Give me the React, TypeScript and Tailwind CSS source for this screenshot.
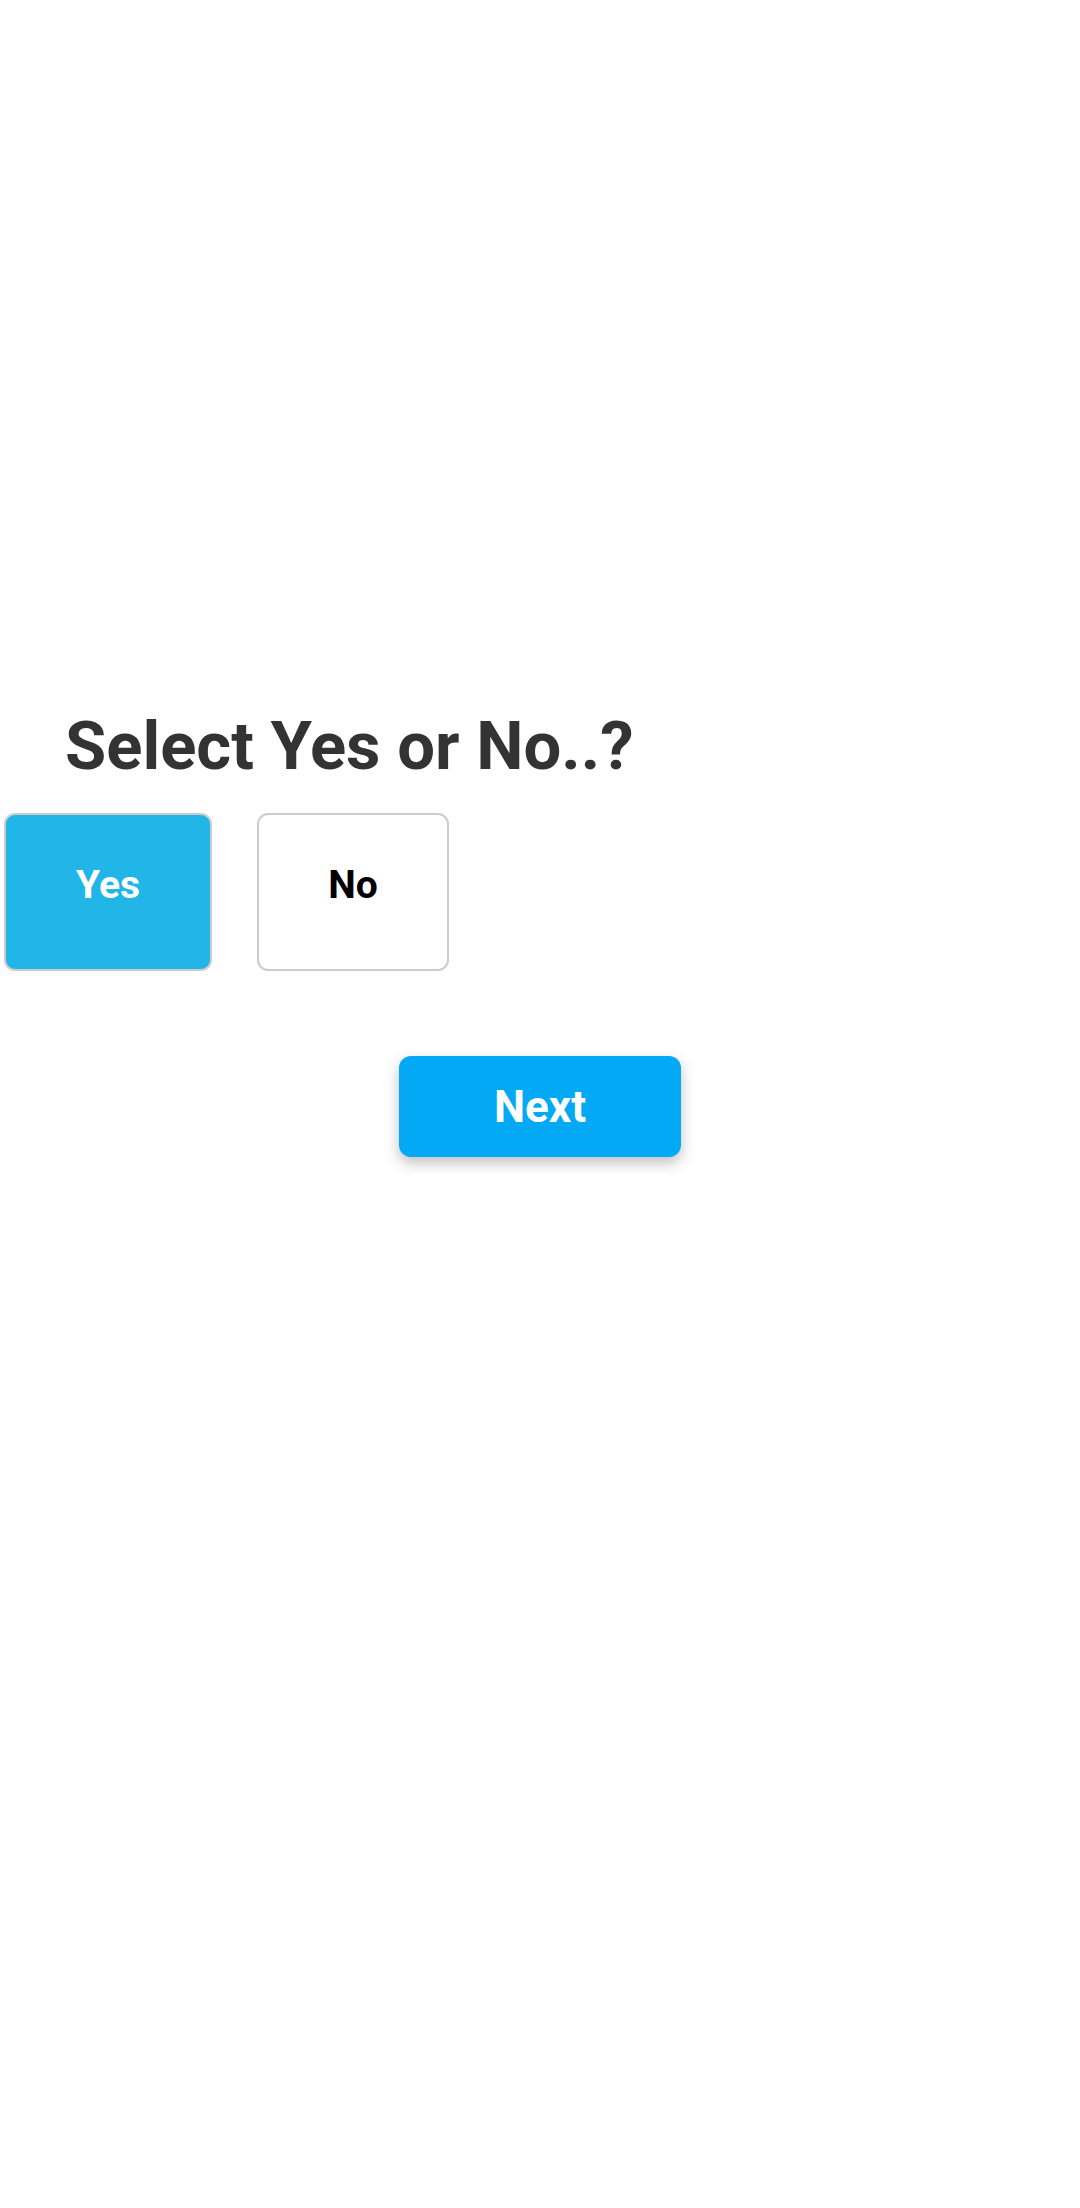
const App = () => {
    return (
        <div className="min-h-[2208px] w-[1080px] bg-white pt-[713px]" style={{ fontFamily: 'Roboto, "Liberation Sans", sans-serif' }}>
            {/* QUESTION */}
            <h1 className="pl-[65px] text-[67px] font-bold leading-none text-[#333333]">Select Yes or No..?</h1>

            {/* OPTIONS */}
            <div className="mt-[33px] flex items-start gap-[45px] pl-[4px]">
                <button className="h-[158px] w-[208px] rounded-[11px] border-2 border-[#cccccc] bg-[#22b5e8] pb-[14px] text-[39px] font-bold text-white">
                    Yes
                </button>
                <button className="h-[158px] w-[192px] rounded-[11px] border-2 border-[#cccccc] bg-white pb-[14px] text-[39px] font-bold text-black">
                    No
                </button>
            </div>

            {/* NEXT */}
            <div className="mt-[85px] flex justify-center">
                <button className="h-[101px] w-[282px] rounded-[12px] bg-[#03a9f4] text-[44px] font-bold text-white shadow-[0_6px_14px_rgba(0,0,0,0.25)]">
                    Next
                </button>
            </div>
        </div>
    )
}

export default App
